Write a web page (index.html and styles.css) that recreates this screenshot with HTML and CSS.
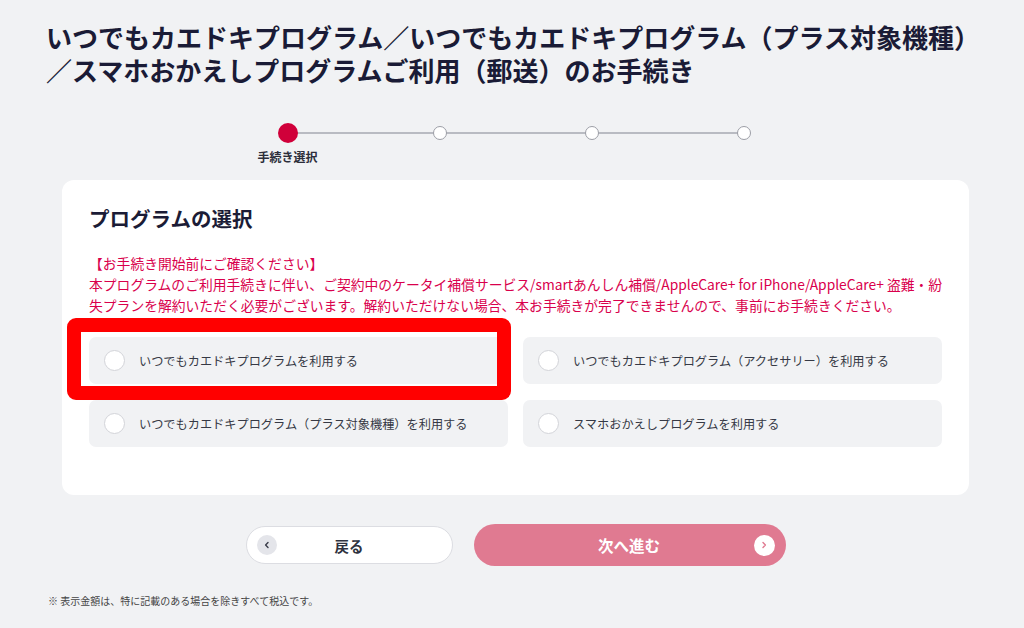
FILE: index.html
```html
<!DOCTYPE html>
<html lang="ja">
<head>
<meta charset="utf-8">
<title>お手続き</title>
<link rel="stylesheet" href="styles.css">
</head>
<body>
<div class="page">
  <h1 class="title"><span class="title-line">いつでもカエドキプログラム／いつでもカエドキプログラム（プラス対象機種）</span><span class="title-line">／スマホおかえしプログラムご利用（郵送）のお手続き</span></h1>

  <div class="main">
    <ol class="stepper">
      <li class="step is-current"><span class="dot"></span><span class="step-label">手続き選択</span></li>
      <li class="step"><span class="dot"></span><span class="step-label"></span></li>
      <li class="step"><span class="dot"></span><span class="step-label"></span></li>
      <li class="step"><span class="dot"></span><span class="step-label"></span></li>
    </ol>

    <section class="card">
      <h2 class="card-title">プログラムの選択</h2>
      <p class="notice">【お手続き開始前にご確認ください】<br>本プログラムのご利用手続きに伴い、ご契約中のケータイ補償サービス/smartあんしん補償/AppleCare+ for iPhone/AppleCare+ 盗難・紛<br>失プランを解約いただく必要がございます。解約いただけない場合、本お手続きが完了できませんので、事前にお手続きください。</p>

      <div class="options">
        <label class="option"><span class="radio"></span><span class="option-text">いつでもカエドキプログラムを利用する</span></label>
        <label class="option"><span class="radio"></span><span class="option-text">いつでもカエドキプログラム（アクセサリー）を利用する</span></label>
        <label class="option"><span class="radio"></span><span class="option-text">いつでもカエドキプログラム（プラス対象機種）を利用する</span></label>
        <label class="option"><span class="radio"></span><span class="option-text">スマホおかえしプログラムを利用する</span></label>
        <span class="highlight"></span>
      </div>
    </section>

    <div class="actions">
      <button class="btn btn-back" type="button">
        <span class="btn-icon icon-back"><svg width="8" height="8" viewBox="0 0 8 8"><polyline points="5,1.5 2.6,4 5,6.5" fill="none" stroke="#3a3d4a" stroke-width="1.4" stroke-linecap="round" stroke-linejoin="round"/></svg></span>
        <span class="btn-text">戻る</span>
      </button>
      <button class="btn btn-next" type="button">
        <span class="btn-text">次へ進む</span>
        <span class="btn-icon icon-next"><svg width="8" height="8" viewBox="0 0 8 8"><polyline points="3,1.5 5.4,4 3,6.5" fill="none" stroke="#e07a91" stroke-width="1.4" stroke-linecap="round" stroke-linejoin="round"/></svg></span>
      </button>
    </div>
  </div>

  <p class="footnote">※ 表示金額は、特に記載のある場合を除きすべて税込です。</p>
</div>
</body>
</html>
```
FILE: styles.css
```css
* { box-sizing: border-box; }

html, body {
  margin: 0;
  padding: 0;
  background: #f1f2f4;
}

body {
  font-family: "Noto Sans CJK JP", "Noto Sans", sans-serif;
  color: #333;
}

.page {
  width: 1024px;
  height: 628px;
  overflow: hidden;
}

.title {
  margin: 20px 0 0 46px;
  font-size: 26px;
  font-weight: 700;
  color: #1a1b36;
}

.title-line {
  display: block;
  height: 33px;
  line-height: 33px;
  white-space: nowrap;
}

.main {
  margin-left: 62px;
  width: 907px;
}

/* stepper */
.stepper {
  list-style: none;
  margin: 37px auto 0;
  padding: 0;
  width: 608px;
  display: grid;
  grid-template-columns: repeat(4, 1fr);
}

.step {
  position: relative;
  display: flex;
  flex-direction: column;
  align-items: center;
}

.step + .step::before {
  content: "";
  position: absolute;
  top: 9px;
  left: -50%;
  right: 50%;
  height: 2px;
  background: #b9bbc2;
  z-index: 0;
}

.dot {
  position: relative;
  z-index: 1;
  width: 14px;
  height: 14px;
  margin: 3px 0;
  border-radius: 50%;
  background: #fff;
  border: 1.5px solid #9c9ea6;
}

.step.is-current .dot {
  width: 20px;
  height: 20px;
  margin: 0;
  background: #d0003a;
  border: none;
}

.step-label {
  margin-top: 6px;
  height: 16px;
  font-size: 12px;
  line-height: 16px;
  font-weight: 700;
  color: #2c2e3a;
  white-space: nowrap;
}

/* card */
.card {
  margin-top: 15px;
  background: #fff;
  border-radius: 12px;
  padding: 24px 27px 48px;
}

.card-title {
  margin: 0;
  font-size: 20.5px;
  line-height: 28px;
  font-weight: 700;
  color: #1b1c36;
}

.notice {
  margin: 21px 0 0;
  font-size: 13.8px;
  line-height: 21px;
  color: #d9004c;
  white-space: nowrap;
}

.options {
  position: relative;
  margin-top: 21px;
  display: grid;
  grid-template-columns: 1fr 1fr;
  column-gap: 15px;
  row-gap: 16px;
}

.option {
  display: flex;
  align-items: center;
  height: 47px;
  padding-left: 15px;
  background: #f1f2f4;
  border-radius: 7px;
}

.radio {
  flex: none;
  width: 21px;
  height: 21px;
  border-radius: 50%;
  background: #fff;
  border: 1px solid #d3d4d9;
}

.option-text {
  margin-left: 14px;
  font-size: 12.2px;
  color: #363945;
  white-space: nowrap;
}

.highlight {
  position: absolute;
  left: -22px;
  top: -19px;
  width: 444px;
  height: 82px;
  border: 14px solid #ff0000;
  border-radius: 9px;
  pointer-events: none;
}

/* actions */
.actions {
  margin-top: 29px;
  display: flex;
  justify-content: center;
  align-items: center;
  gap: 21px;
}

.btn {
  display: flex;
  align-items: center;
  border-radius: 999px;
  font-family: inherit;
  padding: 0 10px;
  cursor: pointer;
}

.btn-back {
  width: 207px;
  height: 38px;
  background: #fff;
  border: 1.5px solid #dcdde2;
}

.btn-next {
  width: 312px;
  height: 42px;
  background: #e07a91;
  border: none;
  padding: 0 11px 0 10px;
}

.btn-icon {
  flex: none;
  width: 20px;
  height: 20px;
  border-radius: 50%;
  display: flex;
  align-items: center;
  justify-content: center;
}

.icon-back { background: #e4e5ea; }
.icon-next { background: #fff; width: 21px; height: 21px; }

.btn-text {
  flex: 1;
  text-align: center;
}

.btn-back .btn-text {
  font-size: 14.5px;
  font-weight: 700;
  color: #2f3240;
  padding-right: 20px;
}

.btn-next .btn-text {
  font-size: 15.5px;
  font-weight: 700;
  color: #fff;
  padding-left: 21px;
}

.footnote {
  margin: 28px 0 0 48px;
  font-size: 10px;
  line-height: 14px;
  color: #444;
}
```
